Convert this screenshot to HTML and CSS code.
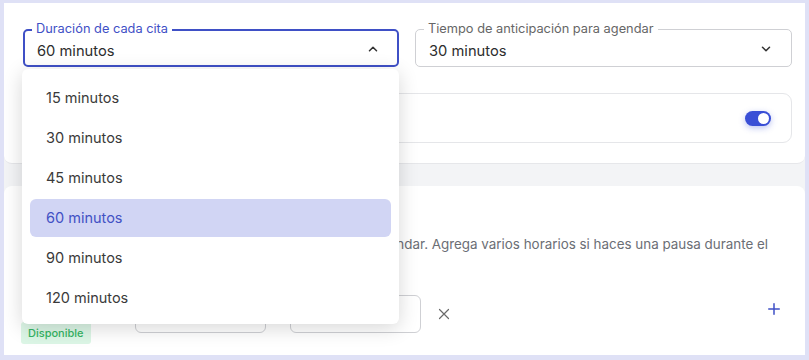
FILE: index.html
```html
<!DOCTYPE html>
<html lang="es">
<head>
    <meta charset="UTF-8">
    <meta name="viewport" content="width=device-width, initial-scale=1.0">
    <title>Disponibilidad</title>
    <link rel="stylesheet" href="styles.css">
</head>
<body>
    <div class="frame">
        <div class="panel">
            <div class="card card-top">
                <p class="cut">Configura cómo y cuándo pueden agendar tus clientes</p>
                <div class="selects">
                    <div class="field open">
                        <span class="label">Duración de cada cita</span>
                        <span class="value">60 minutos</span>
                        <svg class="chev" width="14" height="14" viewBox="0 0 24 24"><path d="M6 15l6-6 6 6" fill="none" stroke="currentColor" stroke-width="2.6" stroke-linecap="round" stroke-linejoin="round"/></svg>
                        <ul class="menu">
                            <li>15 minutos</li>
                            <li>30 minutos</li>
                            <li>45 minutos</li>
                            <li class="active">60 minutos</li>
                            <li>90 minutos</li>
                            <li>120 minutos</li>
                        </ul>
                    </div>
                    <div class="field">
                        <span class="label">Tiempo de anticipación para agendar</span>
                        <span class="value">30 minutos</span>
                        <svg class="chev" width="14" height="14" viewBox="0 0 24 24"><path d="M6 9l6 6 6-6" fill="none" stroke="currentColor" stroke-width="2.6" stroke-linecap="round" stroke-linejoin="round"/></svg>
                    </div>
                </div>
                <div class="toggle-row">
                    <span class="toggle-text">Permitir reservas el mismo día</span>
                    <span class="switch"><span class="knob"></span></span>
                </div>
            </div>

            <div class="card card-bottom">
                <h2 class="title">Horario de atención</h2>
                <p class="desc">Define los horarios en los cuales tus pacientes pueden agendar. Agrega varios horarios si haces una pausa durante el día.</p>
                <div class="day">
                    <div class="day-name">
                        <span>Lunes</span>
                        <span class="badge">Disponible</span>
                    </div>
                    <div class="time">09:00</div>
                    <div class="time">18:00</div>
                    <svg class="remove" width="18" height="18" viewBox="0 0 24 24"><path d="M6 6l12 12M18 6L6 18" fill="none" stroke="currentColor" stroke-width="1.6" stroke-linecap="round"/></svg>
                    <svg class="add" width="18" height="18" viewBox="0 0 24 24"><path d="M12 5v14M5 12h14" fill="none" stroke="currentColor" stroke-width="2" stroke-linecap="round"/></svg>
                </div>
            </div>
        </div>
    </div>
</body>
</html>
```

FILE: styles.css
```css
body {
    margin: 0;
    background: #dfe1f6;
    font-family: Inter, "Noto Sans", sans-serif;
    color: #2d2d2d;
}
.frame {
    padding: 3px 4px 5px 4px;
    height: 352px;
}
.panel {
    background: #f3f4f6;
    height: 352px;
    overflow: hidden;
}
.card {
    background: #fff;
    padding: 0 13px 0 19px;
}
.card-top {
    height: 159px;
    padding-top: 1px;
    border-radius: 0 0 8px 8px;
    border-bottom: 1px solid #e6e7ea;
}
.cut {
    margin: -18px 0 0 0;
    height: 43px;
    font-size: 14px;
    line-height: 17px;
    color: #666;
}
.selects {
    display: grid;
    grid-template-columns: 376px 377px;
    gap: 16px;
}
.field {
    position: relative;
    height: 38px;
    border: 1px solid #cfd0d4;
    border-radius: 5px;
    box-sizing: border-box;
    display: flex;
    align-items: center;
    padding: 0 18px 0 13px;
}
.field.open {
    border: 2px solid #3f50c6;
    padding: 0 17px 0 12px;
}
.label {
    position: absolute;
    top: -9px;
    left: 8px;
    background: #fff;
    padding: 0 4px;
    font-size: 12.8px;
    color: #666;
    line-height: 16px;
}
.open .label {
    left: 7px;
    top: -10px;
    color: #3f50c6;
}
.value {
    flex: 1;
    font-size: 14.7px;
    margin-top: 5px;
}
.chev {
    color: #333;
    margin-top: 1px;
}
.menu {
    position: absolute;
    top: 38px;
    left: -3px;
    width: 377px;
    margin: 0;
    padding: 9px 8px 6px 8px;
    box-sizing: border-box;
    list-style: none;
    background: #fff;
    border-radius: 6px;
    box-shadow: 0 4px 20px rgba(0, 0, 0, 0.16);
    z-index: 5;
}
.menu li {
    height: 40px;
    line-height: 40px;
    padding-left: 16px;
    font-size: 14.5px;
    color: #3a3a3a;
    border-radius: 6px;
}
.menu li.active {
    background: #d1d5f4;
    color: #4251c4;
    height: 38px;
    line-height: 38px;
    margin: 1px 0;
}
.toggle-row {
    margin-top: 26px;
    height: 50px;
    border: 1px solid #e5e6e9;
    border-radius: 9px;
    box-sizing: border-box;
    display: flex;
    align-items: center;
    justify-content: space-between;
    padding: 0 20px 0 16px;
    font-size: 15px;
}
.switch {
    width: 26px;
    height: 15px;
    border-radius: 8px;
    background: #3a4fd6;
    box-shadow: 0 2px 6px rgba(58, 79, 214, 0.35);
    display: flex;
    align-items: center;
    justify-content: flex-end;
    padding: 0 2px;
    box-sizing: border-box;
}
.knob {
    width: 11px;
    height: 11px;
    border-radius: 50%;
    background: #fff;
}
.card-bottom {
    margin-top: 22px;
    border-radius: 8px 8px 0 0;
    height: 170px;
    padding-top: 14px;
}
.title {
    margin: 0;
    font-size: 17px;
    font-weight: 600;
    line-height: 26px;
}
.desc {
    margin: 8px 0 0 0;
    font-size: 13.4px;
    line-height: 20px;
    color: #6b6e75;
    width: 762px;
}
.day {
    margin-top: 21px;
    display: flex;
    align-items: flex-start;
}
.day-name {
    width: 112px;
    display: flex;
    flex-direction: column;
    gap: 2px;
    font-size: 15px;
    padding-top: 6px;
}
.badge {
    align-self: flex-start;
    margin-left: -2px;
    background: #dcf6e6;
    color: #35b564;
    font-size: 11px;
    font-weight: 500;
    padding: 4px 7px;
    border-radius: 3px;
}
.time {
    width: 131px;
    height: 38px;
    border: 1px solid #cfd0d4;
    border-radius: 6px;
    box-sizing: border-box;
    margin-right: 24px;
    font-size: 15px;
    line-height: 36px;
    padding-left: 12px;
}
.remove {
    color: #6a6a6a;
    margin: 10px 0 0 -10px;
}
.add {
    color: #3f50c6;
    margin: 5px 9px 0 auto;
}
```
